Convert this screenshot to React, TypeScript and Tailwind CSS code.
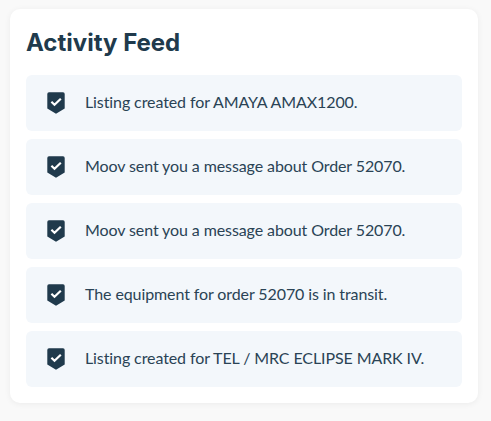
const ITEMS = [
  "Listing created for AMAYA AMAX1200.",
  "Moov sent you a message about Order 52070.",
  "Moov sent you a message about Order 52070.",
  "The equipment for order 52070 is in transit.",
  "Listing created for TEL / MRC ECLIPSE MARK IV.",
];

function ShieldCheck() {
  return (
    <svg width="18" height="22" viewBox="0 0 18 22" className="shrink-0">
      <path
        d="M2 0.3H16A1.7 1.7 0 0 1 17.7 2V16.4L9 21.8L0.3 16.4V2A1.7 1.7 0 0 1 2 0.3Z"
        fill="#203a4c"
      />
      <path
        d="M4.4 9.8L7.5 12.8L13.8 6.8"
        fill="none"
        stroke="#ffffff"
        strokeWidth="2.2"
      />
    </svg>
  );
}

export default function App() {
  return (
    <div className="h-[421px] w-[491px] overflow-hidden bg-[#f9f9f9] pl-[10px] pr-[13px] pt-[9px]">
      <div className="h-[394px] rounded-[10px] bg-white px-4 pt-[17px] shadow-[0_1px_6px_rgba(0,0,0,0.06)]">
        <h1 className="font-['Inter',sans-serif] text-2xl leading-[34px] font-bold text-[#203a4c]">
          Activity Feed
        </h1>
        <div className="mt-[15px] flex flex-col gap-2">
          {ITEMS.map((text, i) => (
            <div
              key={i}
              className="flex h-14 items-center gap-5 rounded-md bg-[#f3f7fb] pl-[21px]"
            >
              <ShieldCheck />
              <p className="mb-0.5 font-['Lato',sans-serif] text-base tracking-[-0.1px] text-[#2a4355]">
                {text}
              </p>
            </div>
          ))}
        </div>
      </div>
    </div>
  );
}
